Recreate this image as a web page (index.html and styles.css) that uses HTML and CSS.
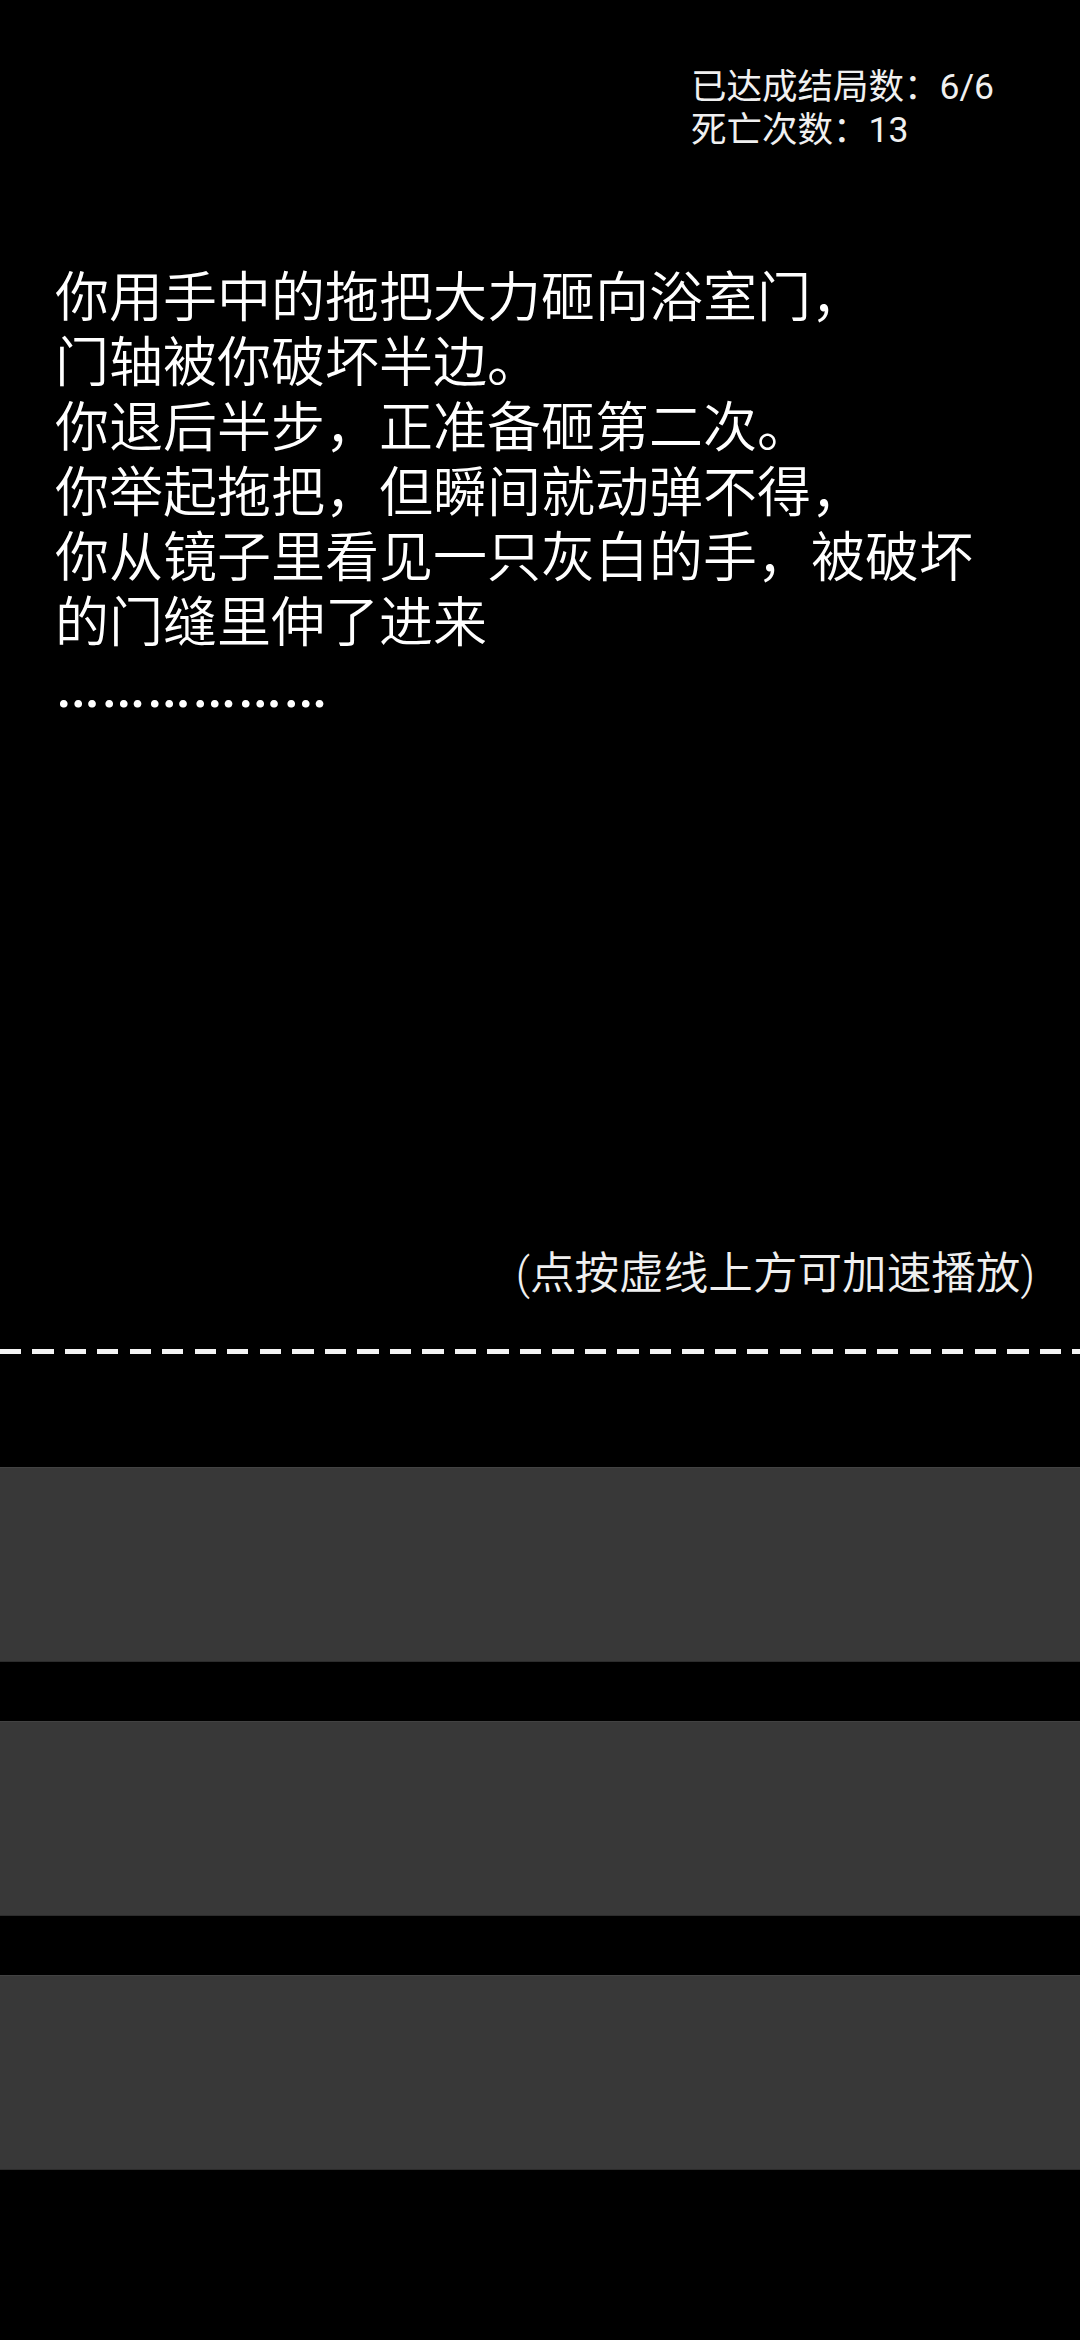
FILE: index.html
```html
<!DOCTYPE html>
<html lang="zh-CN">
<head>
<meta charset="utf-8">
<meta name="viewport" content="width=1080">
<title>结局</title>
<link rel="stylesheet" href="styles.css">
</head>
<body>
<main class="screen">
  <header class="status">
    <div class="status-box">
      <div class="status-line">已达成结局数：6/6</div>
      <div class="status-line">死亡次数：13</div>
    </div>
  </header>
  <section class="story">
    <p class="story-text">你用手中的拖把大力砸向浴室门，<br>门轴被你破坏半边。<br>你退后半步，正准备砸第二次。<br>你举起拖把，但瞬间就动弹不得，<br>你从镜子里看见一只灰白的手，被破坏的门缝里伸了进来<br><span class="dots">………………</span></p>
  </section>
  <p class="hint">(点按虚线上方可加速播放)</p>
  <div class="divider"></div>
  <section class="choices">
    <button class="choice" type="button"></button>
    <button class="choice" type="button"></button>
    <button class="choice" type="button"></button>
  </section>
</main>
</body>
</html>
```
FILE: styles.css
```css
html, body {
  margin: 0;
  padding: 0;
  background: #000;
}

body {
  width: 1080px;
  height: 2340px;
  overflow: hidden;
  font-family: Roboto, "Noto Sans CJK SC", "Noto Sans", sans-serif;
  font-weight: 400;
  color: #fff;
}

.screen {
  display: flex;
  flex-direction: column;
  width: 1080px;
}

.status {
  display: flex;
  justify-content: flex-end;
  padding: 66px 86px 0 0;
}

.status-box {
  display: flex;
  flex-direction: column;
}

.status-line {
  font-size: 35.5px;
  line-height: 43px;
  color: #f0f0f0;
  white-space: nowrap;
}

.story {
  margin-top: 109px;
  padding: 0 90px 0 55px;
}

.story-text {
  margin: 0;
  font-family: "Noto Sans CJK SC", Roboto, sans-serif;
  font-weight: 350;
  font-size: 54px;
  line-height: 65px;
  color: #fff;
}

.dots {
  font-family: Roboto, sans-serif;
  font-weight: 400;
  font-size: 68px;
  line-height: 0;
}

.hint {
  margin: 532px 0 0 0;
  padding-right: 45px;
  text-align: right;
  font-size: 44.6px;
  font-weight: 350;
  line-height: 53px;
  color: #f0f0f0;
}

.divider {
  margin-top: 48px;
  height: 5px;
  background: repeating-linear-gradient(to right, #f4f4f4 0, #f4f4f4 21px, transparent 21px, transparent 32.5px);
}

.choices {
  margin-top: 113px;
  display: flex;
  flex-direction: column;
  gap: 59px;
}

.choice {
  display: block;
  width: 100%;
  height: 195px;
  margin: 0;
  padding: 0;
  border: 0;
  border-top: 1px solid #424242;
  border-bottom: 1px solid #2c2c2c;
  background: #383838;
  font: inherit;
}
```
